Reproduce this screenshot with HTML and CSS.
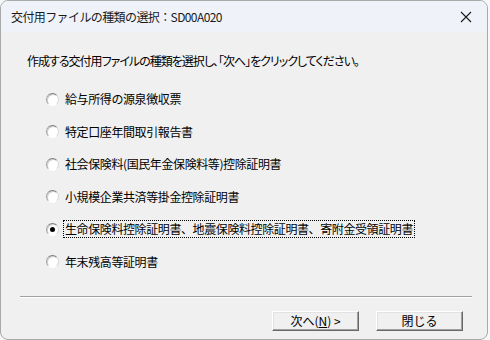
FILE: index.html
```html
<!DOCTYPE html>
<html lang="ja">

<head>
    <meta charset="UTF-8">
    <title>交付用ファイルの種類の選択</title>
    <link rel="stylesheet" href="styles.css">
</head>

<body>
    <div class="window">
        <div class="titlebar">
            <span class="title">交付用ファイルの種類の選択：SD00A020</span>
            <span class="close">
                <svg width="12" height="12" viewBox="0 0 12 12">
                    <path d="M1 1 L11 11 M11 1 L1 11" stroke="#1a1a1a" stroke-width="1.1" fill="none" />
                </svg>
            </span>
        </div>

        <div class="content">
            <p class="prompt">作成する交付用ファイルの種類を選択し、「次へ」をクリックしてください。</p>

            <div class="options">
                <label class="option"><span class="radio"></span><span class="label">給与所得の源泉徴収票</span></label>
                <label class="option"><span class="radio"></span><span class="label">特定口座年間取引報告書</span></label>
                <label class="option"><span class="radio"></span><span class="label">社会保険料(国民年金保険料等)控除証明書</span></label>
                <label class="option"><span class="radio"></span><span class="label">小規模企業共済等掛金控除証明書</span></label>
                <label class="option checked"><span class="radio"></span><span class="label focus">生命保険料控除証明書、地震保険料控除証明書、寄附金受領証明書</span></label>
                <label class="option"><span class="radio"></span><span class="label">年末残高等証明書</span></label>
            </div>

            <div class="separator"></div>

            <div class="buttons">
                <button class="btn">次へ(<u>N</u>) &gt;</button>
                <button class="btn">閉じる</button>
            </div>
        </div>
    </div>
</body>

</html>
```

FILE: styles.css
```css
html {
    background: #f7f8fa;
}

body {
    margin: 0;
    font-family: "Noto Sans CJK JP", "Noto Sans", sans-serif;
    font-size: 12px;
    color: #000;
}

.window {
    width: 486px;
    height: 338px;
    border: 1px solid #a9a9a9;
    border-radius: 8px;
    overflow: hidden;
    background: #f0f0f0;
    display: flex;
    flex-direction: column;
}

.titlebar {
    height: 31px;
    flex-shrink: 0;
    display: flex;
    align-items: center;
    justify-content: space-between;
    padding: 0 12px 0 10px;
    background: #eff3f9;
}

.title {
    color: #1a1a1a;
    padding-bottom: 1px;
    letter-spacing: -0.6px;
}

.close {
    display: flex;
    margin-right: 3px;
}

.content {
    flex: 1;
    display: flex;
    flex-direction: column;
}

.prompt {
    margin: 21px 0 0 26px;
    line-height: 16px;
    font-feature-settings: "palt";
    letter-spacing: -1px;
}

.options {
    display: flex;
    flex-direction: column;
    gap: 14.6px;
    margin: 21px 0 0 45px;
}

.option {
    display: flex;
    align-items: center;
    height: 18px;
}

.radio {
    width: 11px;
    height: 11px;
    border-radius: 50%;
    border: 1px solid #8a8a8a;
    border-color: #7e7e7e #d6d6d6 #ffffff #a0a0a0;
    background: #fff;
    box-shadow: inset 1px 1px 0 #d0d0d0;
    margin-right: 4px;
    position: relative;
}

.checked .radio::after {
    content: "";
    position: absolute;
    left: 3px;
    top: 3px;
    width: 5px;
    height: 5px;
    border-radius: 50%;
    background: #000;
}

.label {
    padding: 0 1px;
    line-height: 16px;
    letter-spacing: -0.4px;
    border: 1px dotted transparent;
}

.label.focus {
    border-color: #000;
}

.separator {
    margin: 25px 15px 0 19px;
    height: 1px;
    background: #a0a0a0;
    border-bottom: 1px solid #fff;
}

.buttons {
    display: flex;
    justify-content: flex-end;
    gap: 17px;
    margin: 13px 24px 0 0;
}

.btn {
    width: 87px;
    height: 20px;
    padding: 0;
    font: inherit;
    color: #000;
    background: #f0f0f0;
    border: 1px solid;
    border-color: #ffffff #696969 #696969 #ffffff;
    box-shadow: inset -1px -1px 0 #a0a0a0, inset 1px 1px 0 #e3e3e3;
    line-height: 16px;
}
```
